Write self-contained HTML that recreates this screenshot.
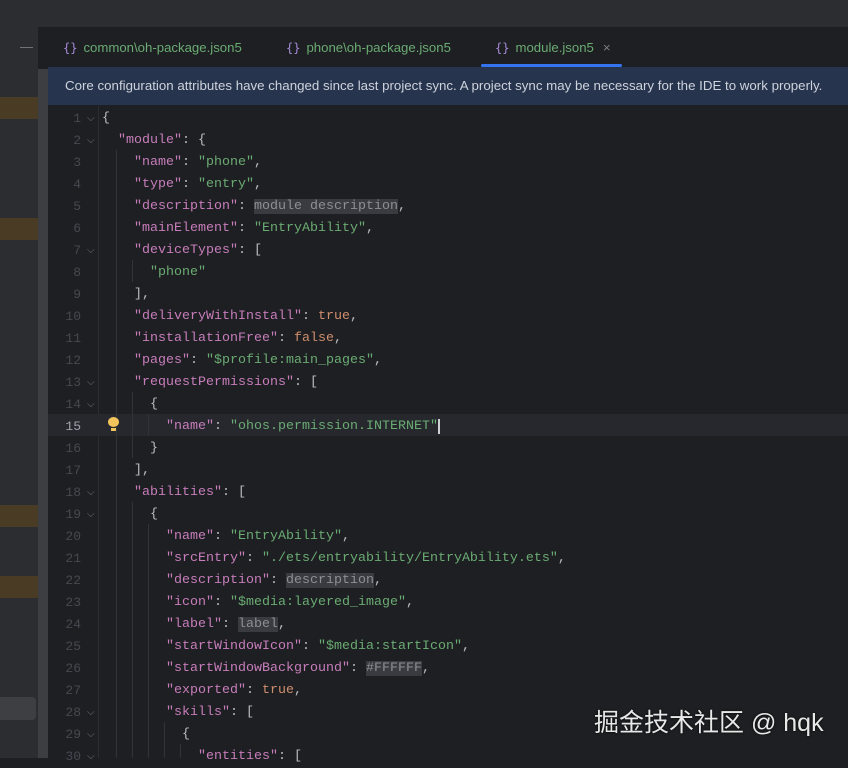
<!DOCTYPE html>
<html><head><meta charset="utf-8"><style>
*{margin:0;padding:0;box-sizing:border-box}
body{width:848px;height:758px;background:#1e1f22;position:relative;overflow:hidden;font-family:"Liberation Sans",sans-serif}
.top{position:absolute;left:0;top:0;width:848px;height:27px;background:#2b2d30}
.left{position:absolute;left:0;top:27px;width:38px;height:731px;background:#2b2d30}
.sb{position:absolute;left:38px;top:69px;width:10px;height:689px;background:#3c3e42}
.hl{position:absolute;left:0;width:38px;height:22px;background:#4a3c24}
.tabs{position:absolute;left:48px;top:27px;width:800px;height:40px;background:#1e1f22}
.tab{position:absolute;top:13px;font-size:13.2px;color:#6aab73;white-space:nowrap}
.tab b{color:#a68ad6;font-weight:normal;margin-right:6px;font-family:"DejaVu Sans Mono",monospace;font-size:12px}
.banner{position:absolute;left:48px;top:67px;width:800px;height:38px;background:#27344d;color:#cdd3dd;font-size:13.3px;padding:11px 0 0 17px;white-space:nowrap}
.ln{position:absolute;left:48px;width:33px;text-align:right;font-family:"Liberation Mono",monospace;font-size:13px;color:#454950;height:22px;line-height:22px;margin-top:2px}
.fold{position:absolute;left:87px;width:10px;color:#6f737a;font-size:10px;height:22px;line-height:22px;margin-top:2px}
.code{position:absolute;left:102px;font-family:"Liberation Mono",monospace;font-size:13.33px;height:22px;line-height:22px;color:#bcbec4;white-space:pre;margin-top:2px}
.k{color:#c77dbb}.s{color:#6aab73}.b{color:#cf8e6d}.g{background:#393b40;color:#8c8f94}
.guide{position:absolute;width:1px;background:#313338}
</style></head><body>
<div class="top"></div>
<div class="left">
<div style="position:absolute;left:20px;top:20px;width:13px;height:1px;background:#6f737a"></div>
</div>
<div class="hl" style="top:97px"></div>
<div class="hl" style="top:218px"></div>
<div class="hl" style="top:505px"></div>
<div class="hl" style="top:576px"></div>
<div style="position:absolute;left:0;top:697px;width:36px;height:23px;background:#3d3f43;border-radius:0 4px 4px 0"></div>
<div class="sb"></div>
<div class="tabs">
<div class="tab" style="left:15px"><b>{}</b>common\oh-package.json5</div>
<div class="tab" style="left:238px"><b>{}</b>phone\oh-package.json5</div>
<div class="tab" style="left:447px"><b>{}</b>module.json5<span style="color:#7a7e85;margin-left:9px">×</span></div>
<div style="position:absolute;left:433px;top:37px;width:141px;height:3px;background:#3574f0;border-radius:2px"></div>
</div>
<div class="banner">Core configuration attributes have changed since last project sync. A project sync may be necessary for the IDE to work properly.</div>
<div style="position:absolute;left:98px;top:106px;width:1px;height:652px;background:#2b2d30"></div>
<div style="position:absolute;left:48px;top:414px;width:800px;height:22px;background:#26282e"></div>
<div class="guide" style="left:116px;top:150px;height:608px"></div>
<div class="guide" style="left:132px;top:260px;height:22px"></div>
<div class="guide" style="left:132px;top:392px;height:66px"></div>
<div class="guide" style="left:148px;top:414px;height:22px"></div>
<div class="guide" style="left:132px;top:502px;height:256px"></div>
<div class="guide" style="left:148px;top:524px;height:234px"></div>
<div class="guide" style="left:164px;top:722px;height:36px"></div>
<div class="guide" style="left:180px;top:744px;height:14px"></div>
<div style="position:absolute;left:108px;top:417px;width:12px;height:14px"><div style="width:11px;height:10px;border-radius:50%;background:#f2c55c"></div><div style="margin-left:3px;width:5px;height:3px;background:#f2c55c;margin-top:1px"></div></div>

<div class="ln" style="top:106px">1</div><div class="fold" style="top:106px">⌵</div><div class="code" style="top:106px">{</div>
<div class="ln" style="top:128px">2</div><div class="fold" style="top:128px">⌵</div><div class="code" style="top:128px">  <span class="k">"module"</span>: {</div>
<div class="ln" style="top:150px">3</div><div class="code" style="top:150px">    <span class="k">"name"</span>: <span class="s">"phone"</span>,</div>
<div class="ln" style="top:172px">4</div><div class="code" style="top:172px">    <span class="k">"type"</span>: <span class="s">"entry"</span>,</div>
<div class="ln" style="top:194px">5</div><div class="code" style="top:194px">    <span class="k">"description"</span>: <span class="g">module description</span>,</div>
<div class="ln" style="top:216px">6</div><div class="code" style="top:216px">    <span class="k">"mainElement"</span>: <span class="s">"EntryAbility"</span>,</div>
<div class="ln" style="top:238px">7</div><div class="fold" style="top:238px">⌵</div><div class="code" style="top:238px">    <span class="k">"deviceTypes"</span>: [</div>
<div class="ln" style="top:260px">8</div><div class="code" style="top:260px">      <span class="s">"phone"</span></div>
<div class="ln" style="top:282px">9</div><div class="code" style="top:282px">    ],</div>
<div class="ln" style="top:304px">10</div><div class="code" style="top:304px">    <span class="k">"deliveryWithInstall"</span>: <span class="b">true</span>,</div>
<div class="ln" style="top:326px">11</div><div class="code" style="top:326px">    <span class="k">"installationFree"</span>: <span class="b">false</span>,</div>
<div class="ln" style="top:348px">12</div><div class="code" style="top:348px">    <span class="k">"pages"</span>: <span class="s">"$profile:main_pages"</span>,</div>
<div class="ln" style="top:370px">13</div><div class="fold" style="top:370px">⌵</div><div class="code" style="top:370px">    <span class="k">"requestPermissions"</span>: [</div>
<div class="ln" style="top:392px">14</div><div class="fold" style="top:392px">⌵</div><div class="code" style="top:392px">      {</div>
<div class="ln" style="top:414px;color:#a1a3ab">15</div><div class="code" style="top:414px">        <span class="k">"name"</span>: <span class="s">"ohos.permission.INTERNET"</span><span style="border-left:2px solid #ced0d6"></span></div>
<div class="ln" style="top:436px">16</div><div class="code" style="top:436px">      }</div>
<div class="ln" style="top:458px">17</div><div class="code" style="top:458px">    ],</div>
<div class="ln" style="top:480px">18</div><div class="fold" style="top:480px">⌵</div><div class="code" style="top:480px">    <span class="k">"abilities"</span>: [</div>
<div class="ln" style="top:502px">19</div><div class="fold" style="top:502px">⌵</div><div class="code" style="top:502px">      {</div>
<div class="ln" style="top:524px">20</div><div class="code" style="top:524px">        <span class="k">"name"</span>: <span class="s">"EntryAbility"</span>,</div>
<div class="ln" style="top:546px">21</div><div class="code" style="top:546px">        <span class="k">"srcEntry"</span>: <span class="s">"./ets/entryability/EntryAbility.ets"</span>,</div>
<div class="ln" style="top:568px">22</div><div class="code" style="top:568px">        <span class="k">"description"</span>: <span class="g">description</span>,</div>
<div class="ln" style="top:590px">23</div><div class="code" style="top:590px">        <span class="k">"icon"</span>: <span class="s">"$media:layered_image"</span>,</div>
<div class="ln" style="top:612px">24</div><div class="code" style="top:612px">        <span class="k">"label"</span>: <span class="g">label</span>,</div>
<div class="ln" style="top:634px">25</div><div class="code" style="top:634px">        <span class="k">"startWindowIcon"</span>: <span class="s">"$media:startIcon"</span>,</div>
<div class="ln" style="top:656px">26</div><div class="code" style="top:656px">        <span class="k">"startWindowBackground"</span>: <span class="g">#FFFFFF</span>,</div>
<div class="ln" style="top:678px">27</div><div class="code" style="top:678px">        <span class="k">"exported"</span>: <span class="b">true</span>,</div>
<div class="ln" style="top:700px">28</div><div class="fold" style="top:700px">⌵</div><div class="code" style="top:700px">        <span class="k">"skills"</span>: [</div>
<div class="ln" style="top:722px">29</div><div class="fold" style="top:722px">⌵</div><div class="code" style="top:722px">          {</div>
<div class="ln" style="top:744px">30</div><div class="fold" style="top:744px">⌵</div><div class="code" style="top:744px">            <span class="k">"entities"</span>: [</div>

<div style="position:absolute;left:594px;top:703px;font-family:'Liberation Sans','Noto Sans CJK SC',sans-serif;font-size:25px;color:#e8e8e8;text-shadow:0 0 2px #000;white-space:nowrap">掘金技术社区 @ hqk</div>
</body></html>
